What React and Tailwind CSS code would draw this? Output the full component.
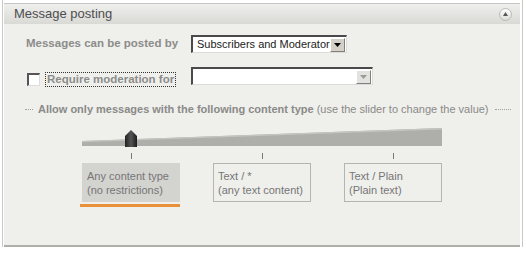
import React from "react";

function Arrow({ light }) {
  return (
    <div
      className={
        "w-[15px] h-[14px] mr-[1px] flex items-center justify-center border border-t-white border-l-white border-r-[#808080] border-b-[#808080] " +
        (light ? "bg-[#e2e2de]" : "bg-[#d4d0c8]")
      }
    >
      <svg width="7" height="4" viewBox="0 0 7 4">
        <polygon points="0,0 7,0 3.5,4" fill={light ? "#9a9a9a" : "#000"} />
      </svg>
    </div>
  );
}

function Option({ title, sub, selected }) {
  return (
    <div className="w-[98px] flex flex-col">
      <div
        className={
          "h-[39px] text-[11px] leading-[14px] text-[#767676] " +
          (selected ? "bg-[#d3d3d0] pl-[5px] pt-[6px]" : "border border-[#b4b4b0] pl-[4px] pt-[5px]")
        }
      >
        <div>{title}</div>
        <div>{sub}</div>
      </div>
      {selected && <div className="mt-[2px] -ml-[2px] w-[100px] h-[3px] bg-[#e8913a]" />}
    </div>
  );
}

export default function App() {
  return (
    <div className="w-[526px] h-[253px] bg-white font-['Liberation_Sans',Arial,sans-serif]">
      <div className="ml-[2px] w-[521px] h-[247px] border-l border-r border-[#c9c9c7] pl-[1px] pr-[2px] pt-[3px]">
        <div className="border-t border-[#c6c6c4] border-b-2 border-b-[#aeaeab]">
          {/* header */}
          <div className="h-[20px] bg-gradient-to-b from-[#efefed] to-[#d9d9d6] flex items-center justify-between pl-[10px] pr-[8px]">
            <span className="text-[13px] text-[#4e4e4e]">Message posting</span>
            <div className="w-[13px] h-[13px] rounded-full border border-[#b9b9b6] bg-gradient-to-b from-white to-[#dcdcd9] flex items-center justify-center">
              <svg width="5" height="4" viewBox="0 0 5 4">
                <polygon points="2.5,0 5,4 0,4" fill="#555" />
              </svg>
            </div>
          </div>
          {/* body */}
          <div className="h-[221px] bg-[#efefec] pt-[11px]">
            {/* row 1 */}
            <div className="flex items-center pl-[22px] h-[18px]">
              <div className="w-[165px] text-[11.5px] font-bold text-[#8c8c8a]">Messages can be posted by</div>
              <div className="w-[156px] h-[18px] bg-white border-t-2 border-l-2 border-t-[#4a4a4a] border-l-[#4a4a4a] border-r border-b border-r-[#dcdcd8] border-b-[#dcdcd8] flex items-center justify-between">
                <span className="pl-[4px] text-[11px] text-[#222]">Subscribers and Moderator</span>
                <Arrow />
              </div>
            </div>
            {/* row 2 */}
            <div className="flex items-start pl-[23px] mt-[14px] h-[20px]">
              <div className="w-[13px] h-[13px] mt-[6px] bg-white border-t-2 border-l-2 border-t-[#555] border-l-[#555] border-r border-b border-r-[#ddd] border-b-[#ddd]" />
              <div className="ml-[5px] mt-[5px] w-[146px] flex">
                <div className="border border-dotted border-[#333] px-[1px] h-[15px] leading-[13px] text-[11.5px] font-bold text-[#8c8c8a] whitespace-nowrap">
                  Require moderation for
                </div>
              </div>
              <div className="w-[182px] h-[18px] bg-white border-t-2 border-l-2 border-t-[#4a4a4a] border-l-[#4a4a4a] border-r border-b border-r-[#dcdcd8] border-b-[#dcdcd8] flex items-center justify-end">
                <Arrow light />
              </div>
            </div>
            {/* legend */}
            <div className="flex items-center ml-[21px] w-[486px] mt-[15px] h-[14px]">
              <div className="w-[8px] border-t border-dotted border-[#a0a09c]" />
              <div className="ml-[5px] text-[11px] text-[#8a8a88] whitespace-nowrap">
                <span className="font-bold">Allow only messages with the following content type</span>{" "}
                <span>(use the slider to change the value)</span>
              </div>
              <div className="ml-[6px] flex-1 border-t border-dotted border-[#a0a09c]" />
            </div>
            {/* slider */}
            <div className="ml-[78px] w-[360px] mt-[12px]">
              <svg width="360" height="32" viewBox="0 0 360 32" className="block">
                <defs>
                  <linearGradient id="th" x1="0" y1="0" x2="1" y2="0">
                    <stop offset="0" stopColor="#222" />
                    <stop offset="0.5" stopColor="#555" />
                    <stop offset="1" stopColor="#1c1c1c" />
                  </linearGradient>
                </defs>
                <polygon points="0,13 360,0 360,18 0,18" fill="#aeaeaa" />
                <polygon points="0,13 360,0 360,1.5 0,14.3" fill="#c4c4c0" />
                <polygon points="43,19 43,8 49,2 55,8 55,19" fill="url(#th)" />
                <rect x="49" y="25" width="1" height="6" fill="#777" />
                <rect x="180" y="25" width="1" height="6" fill="#777" />
                <rect x="311" y="25" width="1" height="6" fill="#777" />
              </svg>
              <div className="flex gap-[33px] mt-[3px]">
                <Option selected title="Any content type" sub="(no restrictions)" />
                <Option title="Text / *" sub="(any text content)" />
                <Option title="Text / Plain" sub="(Plain text)" />
              </div>
            </div>
          </div>
        </div>
      </div>
    </div>
  );
}
